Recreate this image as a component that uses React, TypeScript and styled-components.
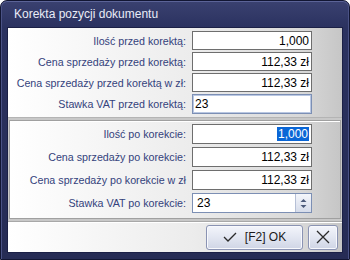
import React from 'react';
import styled, { createGlobalStyle } from 'styled-components';

const GlobalStyle = createGlobalStyle`
  html, body {
    margin: 0;
    padding: 0;
    background: #ffffff;
  }
  * {
    box-sizing: border-box;
  }
`;

const Frame = styled.div`
  width: 350px;
  height: 260px;
  display: flex;
  flex-direction: column;
  background: linear-gradient(180deg, #3a4170 0px, #2b3260 26px, #262c55 100%);
  border: 1px solid #121633;
  border-radius: 7px 7px 0 0;
  box-shadow: inset 0 1px 0 #5b6397, inset 1px 0 0 #4a5285, inset -1px 0 0 #4a5285;
  font-family: 'Liberation Sans', Arial, sans-serif;
`;

const TitleBar = styled.div`
  height: 26px;
  display: flex;
  align-items: center;
  padding-left: 13px;
  color: #e9ecf7;
  font-size: 12px;
`;

const Client = styled.div`
  flex: 1;
  margin: 0 6px 6px 6px;
  background: #c8c8c8;
  border: 1px solid #1b2046;
  display: flex;
  flex-direction: column;
`;

const Panel = styled.div<{ $bordered?: boolean }>`
  display: flex;
  flex-direction: column;
  background: linear-gradient(90deg, #ffffff 0%, #ececec 55%, #d8d8d8 88%, #c6c6c6 100%);
  ${(p) =>
    p.$bordered
      ? `
    margin: 2px 1px 0 1px;
    border: 1px solid #a0a0a0;
    box-shadow: inset 1px 1px 0 #ffffff;
  `
      : ''}
`;

const Upper = styled(Panel)`
  padding: 3px 0 3px 0;
  gap: 2px;
  border-bottom: 1px solid #b4b4b4;
`;

const Lower = styled(Panel)`
  padding: 3px 0 5px 0;
  gap: 3px;
`;

const Row = styled.div<{ $tall?: boolean }>`
  display: flex;
  align-items: center;
  height: ${(p) => (p.$tall ? '20px' : '19px')};
`;

const Label = styled.div<{ $inset?: boolean }>`
  width: ${(p) => (p.$inset ? '181px' : '183px')};
  text-align: right;
  padding-right: 5px;
  color: #34427c;
  font-size: 10.7px;
  white-space: nowrap;
`;

const Field = styled.div<{ $left?: boolean; $focus?: boolean }>`
  width: 120px;
  height: 100%;
  margin-left: 1px;
  background: #ffffff;
  border: 1px solid ${(p) => (p.$focus ? '#7c8fb4' : '#6e6e6e')};
  box-shadow: ${(p) => (p.$focus ? 'inset 0 0 0 1px #b9c7e2' : 'none')};
  display: flex;
  align-items: center;
  justify-content: ${(p) => (p.$left ? 'flex-start' : 'flex-end')};
  padding: 0 2px 0 2px;
  font-size: 12px;
  color: #000000;
`;

const Selected = styled.span`
  background: #0a66d6;
  color: #ffffff;
  padding: 0 1px;
`;

const SpinField = styled(Field)`
  padding: 0;
  justify-content: space-between;
  border-color: #7c8fb4;
`;

const SpinText = styled.span`
  padding-left: 4px;
`;

const SpinButton = styled.div`
  width: 16px;
  height: 100%;
  background: linear-gradient(180deg, #f4f6fb, #d6dcea);
  border-left: 1px solid #b6c0d6;
  display: flex;
  align-items: center;
  justify-content: center;
`;

const Footer = styled(Panel)`
  flex: 1;
  margin-top: 2px;
  border-top: 1px solid #a8a8a8;
  box-shadow: inset 0 1px 0 #ffffff;
  flex-direction: row;
  align-items: center;
  justify-content: flex-end;
  gap: 5px;
  padding: 0 4px 0 0;
`;

const Button = styled.button<{ $wide?: boolean }>`
  height: 25px;
  width: ${(p) => (p.$wide ? '97px' : '30px')};
  border: 1px solid #8a93b3;
  border-radius: 3px;
  background: linear-gradient(180deg, #f3f5fb 0%, #e2e6f1 50%, #cfd5e5 100%);
  box-shadow: inset 0 0 0 1px #f8f9fd;
  display: flex;
  align-items: center;
  justify-content: center;
  gap: 8px;
  padding: 0;
  font-family: 'Liberation Sans', Arial, sans-serif;
  font-size: 12px;
  color: #1a1a1a;
`;

const rowsBefore = [
  { label: 'Ilość przed korektą:', value: '1,000' },
  { label: 'Cena sprzedaży przed korektą:', value: '112,33 zł' },
  { label: 'Cena sprzedaży przed korektą w zł:', value: '112,33 zł' },
];

const rowsAfter = [
  { label: 'Cena sprzedaży po korekcie:', value: '112,33 zł' },
  { label: 'Cena sprzedaży po korekcie w zł', value: '112,33 zł' },
];

const App: React.FC = () => {
  return (
    <>
      <GlobalStyle />
      <Frame>
        <TitleBar>Korekta pozycji dokumentu</TitleBar>
        <Client>
          <Upper>
            {rowsBefore.map((r) => (
              <Row key={r.label}>
                <Label>{r.label}</Label>
                <Field>{r.value}</Field>
              </Row>
            ))}
            <Row $tall>
              <Label>Stawka VAT przed korektą:</Label>
              <Field $left $focus>
                23
              </Field>
            </Row>
          </Upper>
          <Lower $bordered>
            <Row $tall>
              <Label $inset>Ilość po korekcie:</Label>
              <Field>
                <Selected>1,000</Selected>
              </Field>
            </Row>
            {rowsAfter.map((r) => (
              <Row key={r.label} $tall>
                <Label $inset>{r.label}</Label>
                <Field>{r.value}</Field>
              </Row>
            ))}
            <Row $tall>
              <Label $inset>Stawka VAT po korekcie:</Label>
              <SpinField>
                <SpinText>23</SpinText>
                <SpinButton>
                  <svg width="7" height="11" viewBox="0 0 7 11">
                    <path d="M0.5 4 L3.5 1 L6.5 4 Z" fill="#4c5a7a" />
                    <path d="M0.5 7 L3.5 10 L6.5 7 Z" fill="#4c5a7a" />
                  </svg>
                </SpinButton>
              </SpinField>
            </Row>
          </Lower>
          <Footer>
            <Button $wide>
              <svg width="14" height="12" viewBox="0 0 14 12">
                <path d="M1 6 L5 10 L13 2" fill="none" stroke="#2a2a2a" strokeWidth="1.3" />
              </svg>
              <span>[F2] OK</span>
            </Button>
            <Button>
              <svg width="14" height="14" viewBox="0 0 14 14">
                <path d="M1 1 L13 13 M13 1 L1 13" stroke="#2a2a2a" strokeWidth="1.3" />
              </svg>
            </Button>
          </Footer>
        </Client>
      </Frame>
    </>
  );
};

export default App;
